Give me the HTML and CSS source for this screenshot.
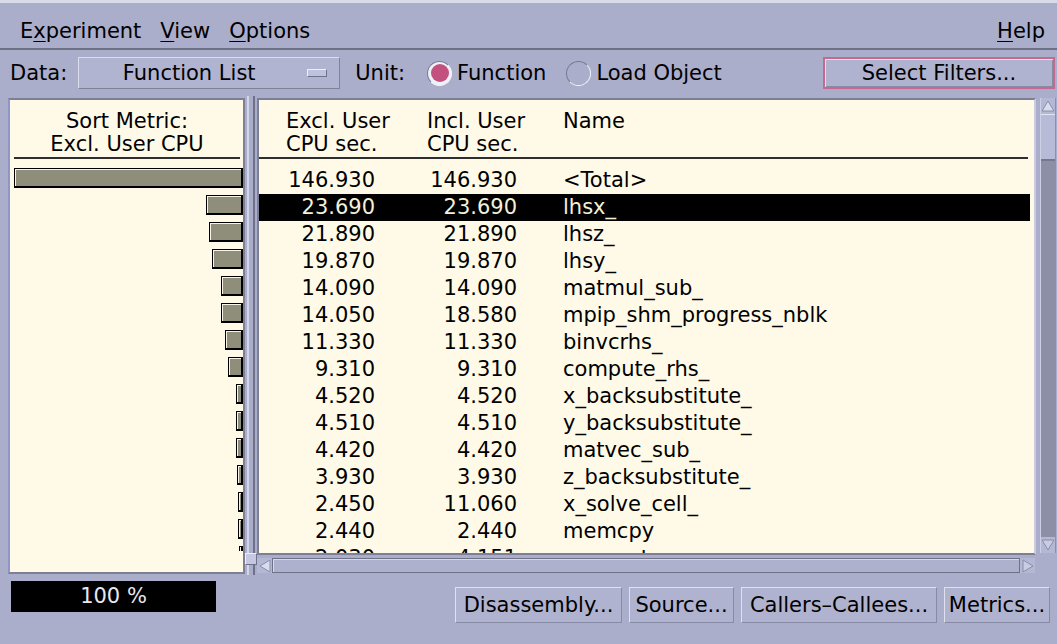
FILE: index.html
```html
<!DOCTYPE html>
<html lang="en">
<head>
<meta charset="utf-8">
<title>Performance Analyzer</title>
<link rel="stylesheet" href="styles.css">
</head>
<body>
<div class="window">
  <div class="menubar">
    <span class="menu">E<u>x</u>periment</span>
    <span class="menu"><u>V</u>iew</span>
    <span class="menu"><u>O</u>ptions</span>
    <span class="menu help"><u>H</u>elp</span>
  </div>

  <div class="toolbar">
    <span class="label">Data:</span>
    <div class="dropdown">
      <span class="dd-text">Function List</span>
      <span class="dd-icon"></span>
    </div>
    <span class="label unit">Unit:</span>
    <span class="radio on"></span><span class="radio-text">Function</span>
    <span class="radio second"></span><span class="radio-text">Load Object</span>
    <div class="btn filters">Select Filters...</div>
  </div>

  <div class="main">
    <div class="metric-panel">
      <div class="metric-head">Sort Metric:<br>Excl. User CPU</div>
      <div class="bars">
        <div class="bar-row"><div class="bar" style="width:229px"></div></div>
        <div class="bar-row"><div class="bar" style="width:37px"></div></div>
        <div class="bar-row"><div class="bar" style="width:34px"></div></div>
        <div class="bar-row"><div class="bar" style="width:31px"></div></div>
        <div class="bar-row"><div class="bar" style="width:22px"></div></div>
        <div class="bar-row"><div class="bar" style="width:22px"></div></div>
        <div class="bar-row"><div class="bar" style="width:18px"></div></div>
        <div class="bar-row"><div class="bar" style="width:15px"></div></div>
        <div class="bar-row"><div class="bar" style="width:7px"></div></div>
        <div class="bar-row"><div class="bar" style="width:7px"></div></div>
        <div class="bar-row"><div class="bar" style="width:7px"></div></div>
        <div class="bar-row"><div class="bar" style="width:6px"></div></div>
        <div class="bar-row"><div class="bar" style="width:5px"></div></div>
        <div class="bar-row"><div class="bar" style="width:5px"></div></div>
        <div class="bar-row"><div class="bar" style="width:4px"></div></div>
      </div>
    </div>

    <div class="splitter"><span class="knob"></span></div>

    <div class="list-pane">
      <div class="list-top">
        <div class="viewport">
          <div class="thead">
            <div class="h1">Excl. User<br>CPU sec.</div>
            <div class="h2">Incl. User<br>CPU sec.</div>
            <div class="h3">Name</div>
          </div>
          <div class="rows">
            <div class="row"><span class="num">146.930</span><span class="num">146.930</span><span class="name">&lt;Total&gt;</span></div>
            <div class="row sel"><span class="num">23.690</span><span class="num">23.690</span><span class="name">lhsx_</span></div>
            <div class="row"><span class="num">21.890</span><span class="num">21.890</span><span class="name">lhsz_</span></div>
            <div class="row"><span class="num">19.870</span><span class="num">19.870</span><span class="name">lhsy_</span></div>
            <div class="row"><span class="num">14.090</span><span class="num">14.090</span><span class="name">matmul_sub_</span></div>
            <div class="row"><span class="num">14.050</span><span class="num">18.580</span><span class="name">mpip_shm_progress_nblk</span></div>
            <div class="row"><span class="num">11.330</span><span class="num">11.330</span><span class="name">binvcrhs_</span></div>
            <div class="row"><span class="num">9.310</span><span class="num">9.310</span><span class="name">compute_rhs_</span></div>
            <div class="row"><span class="num">4.520</span><span class="num">4.520</span><span class="name">x_backsubstitute_</span></div>
            <div class="row"><span class="num">4.510</span><span class="num">4.510</span><span class="name">y_backsubstitute_</span></div>
            <div class="row"><span class="num">4.420</span><span class="num">4.420</span><span class="name">matvec_sub_</span></div>
            <div class="row"><span class="num">3.930</span><span class="num">3.930</span><span class="name">z_backsubstitute_</span></div>
            <div class="row"><span class="num">2.450</span><span class="num">11.060</span><span class="name">x_solve_cell_</span></div>
            <div class="row"><span class="num">2.440</span><span class="num">2.440</span><span class="name">memcpy</span></div>
            <div class="row"><span class="num">2.030</span><span class="num">4.151</span><span class="name">memset</span></div>
          </div>
        </div>
        <div class="vscroll">
          <span class="arrow">
            <svg width="14" height="14" viewBox="0 0 14 14"><polygon points="7,2 13,12 1,12" fill="#d9dcef" stroke="#8a8da6" stroke-width="1"/></svg>
          </span>
          <span class="thumb"></span>
          <span class="track"></span>
          <span class="arrow">
            <svg width="14" height="14" viewBox="0 0 14 14"><polygon points="1,2 13,2 7,12" fill="#c9cce2" stroke="#8a8da6" stroke-width="1"/></svg>
          </span>
        </div>
      </div>
      <div class="hscroll">
        <span class="arrow">
          <svg width="14" height="14" viewBox="0 0 14 14"><polygon points="2,7 12,1 12,13" fill="#d9dcef" stroke="#8a8da6" stroke-width="1"/></svg>
        </span>
        <span class="htrack"></span>
        <span class="arrow">
          <svg width="14" height="14" viewBox="0 0 14 14"><polygon points="12,7 2,1 2,13" fill="#c9cce2" stroke="#8a8da6" stroke-width="1"/></svg>
        </span>
      </div>
    </div>
  </div>

  <div class="footer">
    <div class="progress">100 %</div>
    <div class="actions">
      <div class="btn act w-dis">Disassembly...</div>
      <div class="btn act w-src">Source...</div>
      <div class="btn act w-cc">Callers–Callees...</div>
      <div class="btn act w-met">Metrics...</div>
    </div>
  </div>
</div>
</body>
</html>
```

FILE: styles.css
```css
* { box-sizing: border-box; }

html, body { margin: 0; padding: 0; }

body {
  width: 1057px;
  height: 644px;
  overflow: hidden;
  background: #abaeca;
  font-family: "DejaVu Sans", "Liberation Sans", sans-serif;
  font-size: 21px;
  color: #000;
}

.window {
  height: 644px;
  display: flex;
  flex-direction: column;
  border-top: 3px solid #d9dbea;
}

/* ---------- menu bar ---------- */
.menubar {
  display: flex;
  height: 47px;
  padding: 16px 12px 0 20px;
  line-height: 24px;
  border-bottom: 2px solid #6d6f84;
  flex: none;
}
.menu { margin-right: 19px; }
.menu u { text-underline-offset: 3px; text-decoration-thickness: 1px; }
.menu.help { margin-left: auto; margin-right: 0; }

/* ---------- data / unit bar ---------- */
.toolbar {
  display: flex;
  align-items: center;
  height: 46px;
  padding: 0 2px 0 10px;
  flex: none;
}
.dropdown {
  margin-left: 11px;
  width: 262px;
  height: 32px;
  display: flex;
  align-items: center;
  border: 1px solid;
  border-color: #dcdeee #7f8298 #7f8298 #dcdeee;
  background: #b1b4d0;
}
.dd-text { flex: 1; text-align: center; }
.dd-icon {
  width: 20px;
  height: 8px;
  margin: 0 12px 0 8px;
  border: 1px solid;
  border-color: #eceef8 #6f7288 #6f7288 #eceef8;
  background: #bfc2dc;
}
.unit { margin-left: 15px; }
.radio {
  width: 25px;
  height: 25px;
  margin-left: 22px;
  border-radius: 50%;
  border: 1px solid;
  border-color: #767990 #f2f3fa #f2f3fa #767990;
  display: flex;
  align-items: center;
  justify-content: center;
  flex: none;
}
.radio.on { background: #eef0f8; }
.radio.on::after {
  content: "";
  width: 18px;
  height: 18px;
  border-radius: 50%;
  background: #c2517f;
}
.radio.second { margin-left: 20px; }
.radio-text { margin-left: 5px; }

.btn {
  display: flex;
  align-items: center;
  justify-content: center;
  border: 1px solid;
  border-color: #dfe1ef #868aa4 #868aa4 #dfe1ef;
  background: #b0b3cf;
  white-space: nowrap;
}
.filters {
  margin-left: auto;
  width: 232px;
  height: 32px;
  border: 2px solid #c46a8e;
  box-shadow: inset 1px 1px 0 #dfe1ef, inset -1px -1px 0 #868aa4;
}

/* ---------- main split area ---------- */
.main {
  display: flex;
  height: 479px;
  padding-left: 8px;
  position: relative;
  flex: none;
}

.metric-panel {
  width: 237px;
  height: 476px;
  margin-top: 2px;
  border: 2px solid #7c7f96;
  border-left-color: #8f96c6;
  background: #fffae8;
  overflow: hidden;
}
.metric-head {
  padding-top: 10px;
  padding-bottom: 1px;
  margin: 0 3px 0 4px;
  line-height: 23px;
  text-align: center;
  white-space: nowrap;
  border-bottom: 2px solid #2e2e2e;
}
.bars {
  margin-top: 8px;
  height: 384px;
  overflow: hidden;
}
.bar-row {
  height: 27px;
  display: flex;
  justify-content: flex-end;
  align-items: flex-start;
}
.bar {
  margin-top: 1px;
  height: 20px;
  min-width: 4px;
  border: 1px solid #000;
  border-right-width: 2px;
  border-bottom-width: 2px;
  background: #8e8e7a;
  box-shadow: inset 1px 1px 0 #f6f4e6;
}

.splitter {
  width: 12px;
  display: flex;
  justify-content: center;
}
.splitter::before {
  content: "";
  width: 4px;
  border-left: 2px solid #d4d7ea;
  border-right: 2px solid #6e7188;
}
.knob {
  position: absolute;
  left: 245px;
  bottom: 10px;
  width: 12px;
  height: 12px;
  background: #c5c8e0;
  border: 1px solid;
  border-color: #eceef8 #6e7188 #6e7188 #eceef8;
}

.list-pane {
  width: 799px;
  margin-top: 2px;
  display: flex;
  flex-direction: column;
}
.list-top {
  display: flex;
  height: 457px;
}
.viewport {
  width: 779px;
  height: 457px;
  border: 2px solid #7c7f96;
  border-right-color: #c9cbe0;
  background: #fffae8;
  overflow: hidden;
}
.thead {
  display: grid;
  grid-template-columns: 116px 142px 1fr;
  padding-top: 10px;
  padding-bottom: 1px;
  margin-right: 6px;
  line-height: 23px;
  white-space: nowrap;
  border-bottom: 2px solid #2e2e2e;
}
.h1 { padding-left: 27px; }
.h2 { padding-left: 52px; }
.h3 { padding-left: 46px; }

.rows { margin-top: 8px; }
.row {
  display: grid;
  grid-template-columns: 116px 142px 1fr;
  height: 27px;
  line-height: 27px;
  margin-right: 4px;
  white-space: nowrap;
}
.row .num { text-align: right; }
.row .name { padding-left: 46px; }
.row.sel { background: #000; color: #f4efd8; }

.vscroll {
  width: 16px;
  margin-left: 4px;
  height: 455px;
  display: flex;
  flex-direction: column;
  border-left: 1px solid #cdd0e6;
  border-right: 1px solid #8c8fa8;
}
.arrow {
  height: 16px;
  flex: none;
  display: flex;
  align-items: center;
  justify-content: center;
  background: #b5b8d4;
}
.thumb {
  height: 47px;
  flex: none;
  background: #b8bbd8;
  border-top: 1px solid #e4e6f3;
  border-bottom: 2px solid #74778e;
}
.track {
  flex: 1;
  background: #8d8fa6;
}

.hscroll {
  margin-top: 3px;
  width: 778px;
  height: 15px;
  display: flex;
}
.hscroll .arrow { width: 15px; height: 15px; }
.htrack {
  flex: 1;
  background: #aeb1cd;
  border: 1px solid #6e7188;
  box-shadow: inset 1px 1px 0 #d6d9ec;
}

/* ---------- footer ---------- */
.footer {
  display: flex;
  align-items: flex-start;
  padding-left: 11px;
  flex: 1;
}
.progress {
  margin-top: 6px;
  width: 205px;
  height: 31px;
  line-height: 31px;
  background: #000;
  color: #e8e8ee;
  text-align: center;
}
.actions {
  margin-left: auto;
  margin-right: 7px;
  margin-top: 12px;
  display: flex;
  gap: 7px;
}
.act { height: 36px; }
.w-dis { width: 167px; }
.w-src { width: 105px; }
.w-cc { width: 196px; }
.w-met { width: 106px; }
```
